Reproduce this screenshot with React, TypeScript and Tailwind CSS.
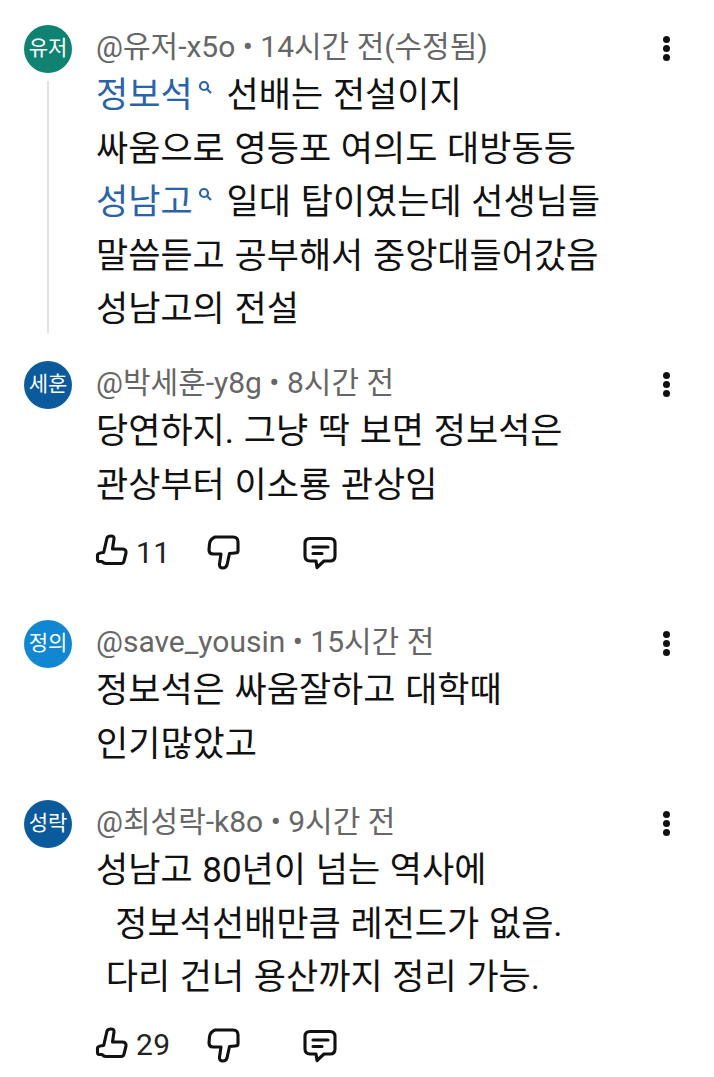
import React from 'react'

const font = { fontFamily: '"Roboto", "Noto Sans CJK KR", sans-serif' }

function Kebab() {
  return (
    <div className="absolute right-[44px] top-[11px] flex flex-col gap-[2px]">
      <span className="w-[7px] h-[7px] rounded-full bg-[#111]" />
      <span className="w-[7px] h-[7px] rounded-full bg-[#111]" />
      <span className="w-[7px] h-[7px] rounded-full bg-[#111]" />
    </div>
  )
}

function Icon({ children }: { children: React.ReactNode }) {
  return (
    <svg width="44" height="44" viewBox="0 0 44 44" fill="none" stroke="#111" strokeWidth="3.1" strokeLinejoin="round" strokeLinecap="round" className="shrink-0">
      {children}
    </svg>
  )
}

function Actions({ count, className }: { count: string; className: string }) {
  return (
    <div className={`flex items-center h-[44px] pl-[90px] text-[#222] ${className}`}>
      <Icon>
        <path d="M7.5 25 Q7.5 23 13.7 22.5 L17 8 Q18 6 21 6 Q24.5 6 24 9 L22.5 19 L32 19 Q36.5 19 36 23 L34 31 Q33.5 33.5 31 33.5 L16 33.5 Q13.5 33.5 12 31.5 L9 31.5 Q7.5 31.5 7.5 29 Z" />
      </Icon>
      <span className="ml-[2px] w-[66px] text-[30px] tracking-[0.5px]">{count}</span>
      <Icon>
        <path d="M13 7 L31 7 Q36 7 36 12 L36 21 Q36 23 33 23 L27.5 23.5 L25 35 Q24 38 21 38 Q17 38 17.5 34 L19 24 L11 24 Q7 24 7 20 L7.5 14 Q8 9 13 7 Z" />
      </Icon>
      <div className="ml-[54px]">
        <Icon>
          <path d="M10 8.5 L30 8.5 Q35 8.5 35 13.5 L35 26 Q35 31 30 31 L24 31 L17 37.5 L16 31 L10 31 Q5 31 5 26 L5 13.5 Q5 8.5 10 8.5 Z" />
          <path d="M13 17 L28 17 M13 23.5 L22 23.5" />
        </Icon>
      </div>
    </div>
  )
}

function Mention({ children }: { children: string }) {
  return (
    <span className="text-[#2a63a8]">
      {children}
      <svg width="14" height="14" viewBox="0 0 14 14" fill="none" stroke="#2a63a8" strokeWidth="2.2" className="inline-block align-[13px] ml-[5px] mr-[15px]">
        <circle cx="6" cy="6" r="4" />
        <path d="M9 9 L13 13" />
      </svg>
    </span>
  )
}

function Row({ avatar, color, name, children, className, thread }: { avatar: string; color: string; name: string; children: React.ReactNode; className: string; thread?: boolean }) {
  return (
    <div className={`relative flex ${className}`}>
      <div className="w-[96px] shrink-0 pl-[24px] flex flex-col">
        <div className={`w-[48px] h-[48px] rounded-full flex items-center justify-center text-white text-[21px] ${color}`}>{avatar}</div>
        {thread && <div className="ml-[23px] mt-[8px] w-[2px] h-[252px] bg-[#e2e2e2]" />}
      </div>
      <div className="flex-1 min-w-0">
        <div className="text-[#666] text-[30px] leading-[43px] whitespace-nowrap">{name}</div>
        <div className="text-[#111] text-[35px] leading-[53.5px] mt-[1px] whitespace-pre [word-spacing:1px]">{children}</div>
      </div>
      <Kebab />
    </div>
  )
}

export default function App() {
  return (
    <div className="w-[714px] h-[1077px] bg-white overflow-hidden pt-[25px]" style={font}>
      <Row avatar="유저" color="bg-[#0f8272]" name="@유저-x5o • 14시간 전(수정됨)" thread className="h-[336px]">
        <Mention>정보석</Mention>선배는 전설이지{'\n'}싸움으로 영등포 여의도 대방동등{'\n'}<Mention>성남고</Mention>일대 탑이였는데 선생님들{'\n'}말씀듣고 공부해서 중앙대들어갔음{'\n'}성남고의 전설
      </Row>
      <Row avatar="세훈" color="bg-[#0b5a9c]" name="@박세훈-y8g • 8시간 전" className="">
        당연하지. 그냥 딱 보면 정보석은{'\n'}관상부터 이소룡 관상임
      </Row>
      <Actions count="11" className="mt-[18px]" />
      <Row avatar="정의" color="bg-[#1087d0]" name="@save_yousin • 15시간 전" className="mt-[46px]">
        정보석은 싸움잘하고 대학때{'\n'}인기많았고
      </Row>
      <Row avatar="성락" color="bg-[#0b5a9c]" name="@최성락-k8o • 9시간 전" className="mt-[29px]">
        성남고 80년이 넘는 역사에{'\n'}  정보석선배만큼 레전드가 없음.{'\n'} 다리 건너 용산까지 정리 가능.
      </Row>
      <Actions count="29" className="mt-[18px]" />
    </div>
  )
}
